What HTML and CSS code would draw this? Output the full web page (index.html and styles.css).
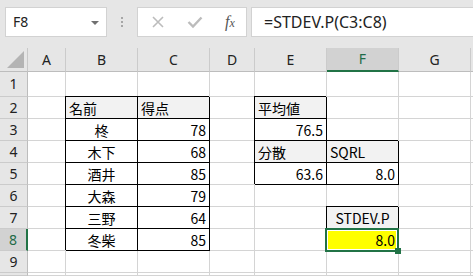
FILE: index.html
```html
<!DOCTYPE html>
<html lang="ja">
<head>
<meta charset="utf-8">
<link rel="stylesheet" href="styles.css">
</head>
<body>
<div class="app">
  <div class="topbar">
    <div class="namebox"><span class="nb-text">F8</span><span class="caret"></span></div>
    <div class="dots"><span></span><span></span><span></span></div>
    <div class="iconbox">
      <svg class="ico-x" width="14" height="14" viewBox="0 0 14 14"><path d="M2 2 L12 12 M12 2 L2 12" stroke="#bcbcbc" stroke-width="1.6" fill="none"/></svg>
      <svg class="ico-ok" width="16" height="14" viewBox="0 0 16 14"><path d="M1.5 7 L6 11.5 L14.5 2.5" stroke="#bcbcbc" stroke-width="2.4" fill="none"/></svg>
      <span class="fx">f<span class="fx-x">x</span></span>
    </div>
    <div class="formula">=STDEV.P(C3:C8)</div>
  </div>
  <div class="sheet">
    <div class="corner"><span class="tri"></span></div>
    <div class="ch">A</div><div class="ch">B</div><div class="ch">C</div><div class="ch">D</div><div class="ch">E</div><div class="ch sel-col">F</div><div class="ch">G</div><div class="ch edge"></div>

    <div class="rh">1</div><div class="c"></div><div class="c"></div><div class="c"></div><div class="c"></div><div class="c"></div><div class="c"></div><div class="c"></div><div class="c edge"></div>

    <div class="rh">2</div><div class="c"></div><div class="c b fill l">名前</div><div class="c b fill l">得点</div><div class="c"></div><div class="c b fill l">平均値</div><div class="c"></div><div class="c"></div><div class="c edge"></div>

    <div class="rh">3</div><div class="c"></div><div class="c b ctr">柊</div><div class="c b r">78</div><div class="c"></div><div class="c b r">76.5</div><div class="c"></div><div class="c"></div><div class="c edge"></div>

    <div class="rh">4</div><div class="c"></div><div class="c b ctr">木下</div><div class="c b r">68</div><div class="c"></div><div class="c b fill l">分散</div><div class="c b fill l">SQRL</div><div class="c"></div><div class="c edge"></div>

    <div class="rh">5</div><div class="c"></div><div class="c b ctr">酒井</div><div class="c b r">85</div><div class="c"></div><div class="c b r">63.6</div><div class="c b r">8.0</div><div class="c"></div><div class="c edge"></div>

    <div class="rh">6</div><div class="c"></div><div class="c b ctr">大森</div><div class="c b r">79</div><div class="c"></div><div class="c"></div><div class="c"></div><div class="c"></div><div class="c edge"></div>

    <div class="rh">7</div><div class="c"></div><div class="c b ctr">三野</div><div class="c b r">64</div><div class="c"></div><div class="c"></div><div class="c b fill ctr">STDEV.P</div><div class="c"></div><div class="c edge"></div>

    <div class="rh sel-row">8</div><div class="c"></div><div class="c b ctr">冬柴</div><div class="c b r">85</div><div class="c"></div><div class="c"></div><div class="c b yellow r active">8.0<span class="selbox"></span><span class="handle"></span></div><div class="c"></div><div class="c edge"></div>

    <div class="rh">9</div><div class="c"></div><div class="c"></div><div class="c"></div><div class="c"></div><div class="c"></div><div class="c"></div><div class="c"></div><div class="c edge"></div>

    <div class="rh"></div><div class="c"></div><div class="c"></div><div class="c"></div><div class="c"></div><div class="c"></div><div class="c"></div><div class="c"></div><div class="c edge"></div>
  </div>
</div>
</body>
</html>
```
FILE: styles.css
```css
* { box-sizing: border-box; }
html, body { margin: 0; padding: 0; }
body {
  width: 473px;
  height: 276px;
  overflow: hidden;
  background: #fff;
  font-family: "Noto Sans CJK JP", "Noto Sans", sans-serif;
  color: #000;
}
.app { width: 473px; height: 276px; overflow: hidden; }

.topbar {
  height: 48px;
  background: #e6e6e6;
  display: flex;
  align-items: flex-start;
  padding-top: 7px;
  padding-left: 5px;
  white-space: nowrap;
  overflow: hidden;
}
.topbar > * { flex-shrink: 0; }
.namebox {
  width: 102px;
  height: 30px;
  background: #fff;
  border: 1px solid #d2d2d2;
  display: flex;
  align-items: center;
  padding-left: 7px;
  position: relative;
}
.nb-text {
  font-family: "Noto Sans", sans-serif;
  font-size: 14px;
  color: #222;
  line-height: 1;
}
.caret {
  position: absolute;
  right: 7px;
  top: 13px;
  width: 0; height: 0;
  border-left: 4px solid transparent;
  border-right: 4px solid transparent;
  border-top: 4px solid #707070;
}
.dots {
  width: 30px;
  height: 30px;
  display: flex;
  flex-direction: column;
  align-items: center;
  justify-content: center;
  gap: 2px;
}
.dots span {
  width: 2px; height: 2px;
  background: #a6a6a6;
}
.iconbox {
  width: 110px;
  height: 30px;
  background: #fff;
  border: 1px solid #d2d2d2;
  display: flex;
  align-items: center;
  padding-left: 13px;
}
.ico-x { margin-right: 22px; }
.ico-ok { margin-right: 22px; }
.fx {
  font-family: "Liberation Serif", serif;
  font-style: italic;
  font-size: 16px;
  color: #555;
  line-height: 1;
}
.fx-x { font-size: 12px; }
.formula {
  margin-left: 4px;
  width: 240px;
  height: 30px;
  background: #fff;
  border: 1px solid #d2d2d2;
  border-right: none;
  padding-left: 12px;
  display: flex;
  align-items: center;
  font-family: "Noto Sans", sans-serif;
  font-size: 16px;
  color: #222;
  line-height: 1;
}

.sheet {
  display: grid;
  grid-template-columns: 28px 38px 72px 72px 45px 72px 72px 72px 2px;
  grid-template-rows: 24px 25px repeat(8, 22px) 3px;
  font-size: 14px;
  line-height: 1;
}
.corner {
  background: #e6e6e6;
  border-right: 1px solid #c8c8c8;
  border-bottom: 1px solid #bdbdbd;
  position: relative;
}
.tri {
  position: absolute;
  right: 3px;
  bottom: 3px;
  width: 0; height: 0;
  border-left: 17px solid transparent;
  border-bottom: 17px solid #b4b4b4;
}
.ch {
  background: #e6e6e6;
  border-right: 1px solid #cbcbcb;
  border-bottom: 1px solid #bdbdbd;
  display: flex;
  align-items: center;
  justify-content: center;
  font-family: "Noto Sans", sans-serif;
  font-size: 14px;
  color: #222;
}
.ch.edge { border-right: none; }
.ch.sel-col {
  background: #d2d2d2;
  border-bottom: 2px solid #217346;
  color: #1f6b47;
}
.rh {
  background: #e6e6e6;
  border-right: 1px solid #bdbdbd;
  border-bottom: 1px solid #cbcbcb;
  display: flex;
  align-items: center;
  justify-content: center;
  font-family: "Noto Sans", sans-serif;
  font-size: 14px;
  color: #222;
}
.rh.sel-row {
  background: #d2d2d2;
  border-right: 2px solid #217346;
  color: #1f6b47;
}
.c {
  background: #fff;
  border-right: 1px solid #d4d4d4;
  border-bottom: 1px solid #d4d4d4;
  display: flex;
  align-items: center;
  padding: 0 3px;
  white-space: nowrap;
  position: relative;
}
.c.edge { border-right: none; }
.b {
  border-right-color: #000;
  border-bottom-color: #000;
  box-shadow: -1px -1px 0 #000;
}
.fill { background: #f2f2f2; }
.yellow { background: #ffff00; }
.l { justify-content: flex-start; }
.r { justify-content: flex-end; }
.ctr { justify-content: center; }

.active { z-index: 2; }
.selbox {
  position: absolute;
  left: -2px;
  top: -1px;
  right: -1px;
  bottom: -2px;
  border: 2px solid #217346;
  box-shadow: inset 0 0 0 1px #fff;
}
.handle {
  position: absolute;
  right: -3px;
  bottom: -4px;
  width: 6px;
  height: 6px;
  background: #217346;
}
```
